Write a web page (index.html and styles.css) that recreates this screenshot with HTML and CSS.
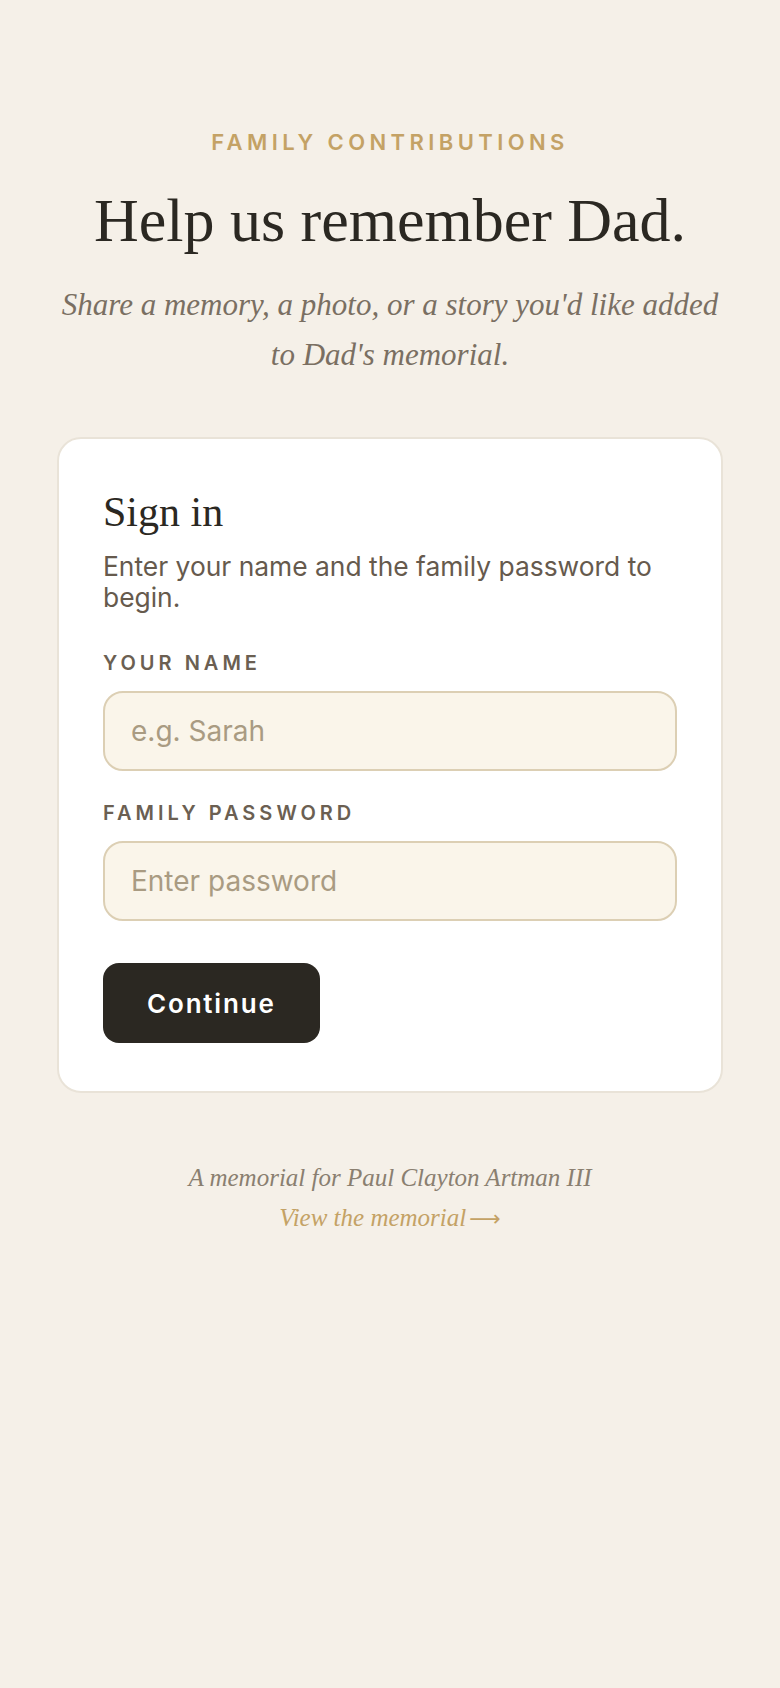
FILE: index.html
```html
<!DOCTYPE html>
<html lang="en">
<head>
  <meta charset="UTF-8" />
  <meta name="viewport" content="width=device-width, initial-scale=1.0"/>
  <title>Family Contributions</title>
  <link rel="stylesheet" href="styles.css">
</head>
<body>

  <main class="page">
    <p class="eyebrow">Family Contributions</p>
    <h1 class="title">Help us remember Dad.</h1>
    <p class="intro">Share a memory, a photo, or a story you'd like added to Dad's memorial.</p>

    <form class="card" onsubmit="return false;">
      <h2 class="card-title">Sign in</h2>
      <p class="card-text">Enter your name and the family password to begin.</p>

      <div class="field">
        <label class="label" for="name">Your name</label>
        <input class="input" type="text" id="name" placeholder="e.g. Sarah">
      </div>

      <div class="field">
        <label class="label" for="password">Family password</label>
        <input class="input" type="password" id="password" placeholder="Enter password">
      </div>

      <button class="button" type="submit">Continue</button>
    </form>

    <footer class="footer">
      <p class="footer-line">A memorial for Paul Clayton Artman III</p>
      <a class="footer-link" href="#">View the memorial<span class="arrow">⟶</span></a>
    </footer>
  </main>

</body>
</html>
```

FILE: styles.css
```css
body {
  margin: 0;
  background-color: #f5f0e8;
  font-family: Inter, "Liberation Sans", sans-serif;
  color: #2b2822;
}

.page {
  padding: 126px 57px 80px;
  text-align: center;
}

.eyebrow {
  margin: 0;
  font-size: 22px;
  line-height: 33px;
  font-weight: 600;
  letter-spacing: 0.2em;
  text-transform: uppercase;
  color: #c4a265;
}

.title {
  margin: 25px 0 0;
  font-family: "Liberation Serif", serif;
  font-size: 62px;
  line-height: 72px;
  font-weight: 400;
  color: #2b2822;
}

.intro {
  margin: 24px 0 0;
  font-family: "Liberation Serif", serif;
  font-style: italic;
  font-size: 31px;
  line-height: 50px;
  color: #7a6f62;
}

.card {
  margin-top: 57px;
  background: #ffffff;
  border: 2px solid #e9e3d8;
  border-radius: 24px;
  padding: 48px 44px 48px;
  text-align: left;
}

.card-title {
  margin: 0 0 14px;
  font-family: "Liberation Serif", serif;
  font-size: 42px;
  line-height: 50px;
  font-weight: 400;
  color: #2b2822;
}

.card-text {
  margin: 0 0 38px;
  font-size: 26.4px;
  line-height: 31px;
  color: #665a4d;
}

.field {
  margin-bottom: 30px;
}

.label {
  display: block;
  margin-bottom: 16px;
  font-size: 20px;
  line-height: 24px;
  font-weight: 600;
  letter-spacing: 0.2em;
  text-transform: uppercase;
  color: #6b5f52;
}

.input {
  display: block;
  box-sizing: border-box;
  width: 100%;
  height: 80px;
  padding: 0 26px;
  font-family: Inter, "Liberation Sans", sans-serif;
  font-size: 28px;
  color: #2b2822;
  background: #faf5ea;
  border: 2px solid #dccfb4;
  border-radius: 20px;
  outline: none;
}

.input::placeholder {
  color: #a99b82;
}

.button {
  margin-top: 12px;
  height: 80px;
  padding: 0 44px;
  font-family: Inter, "Liberation Sans", sans-serif;
  font-size: 26px;
  font-weight: 600;
  letter-spacing: 0.07em;
  color: #ffffff;
  background-color: #2b2822;
  border: none;
  border-radius: 16px;
  cursor: pointer;
}

.footer {
  margin-top: 65px;
  font-family: "Liberation Serif", serif;
  font-style: italic;
  font-size: 25px;
  line-height: 40px;
}

.footer-line {
  margin: 0;
  color: #8a7f70;
}

.footer-link {
  color: #c4a265;
  text-decoration: none;
}

.arrow {
  margin-left: 3px;
  font-style: normal;
  font-family: "DejaVu Sans", sans-serif;
  font-size: 22px;
}
```
